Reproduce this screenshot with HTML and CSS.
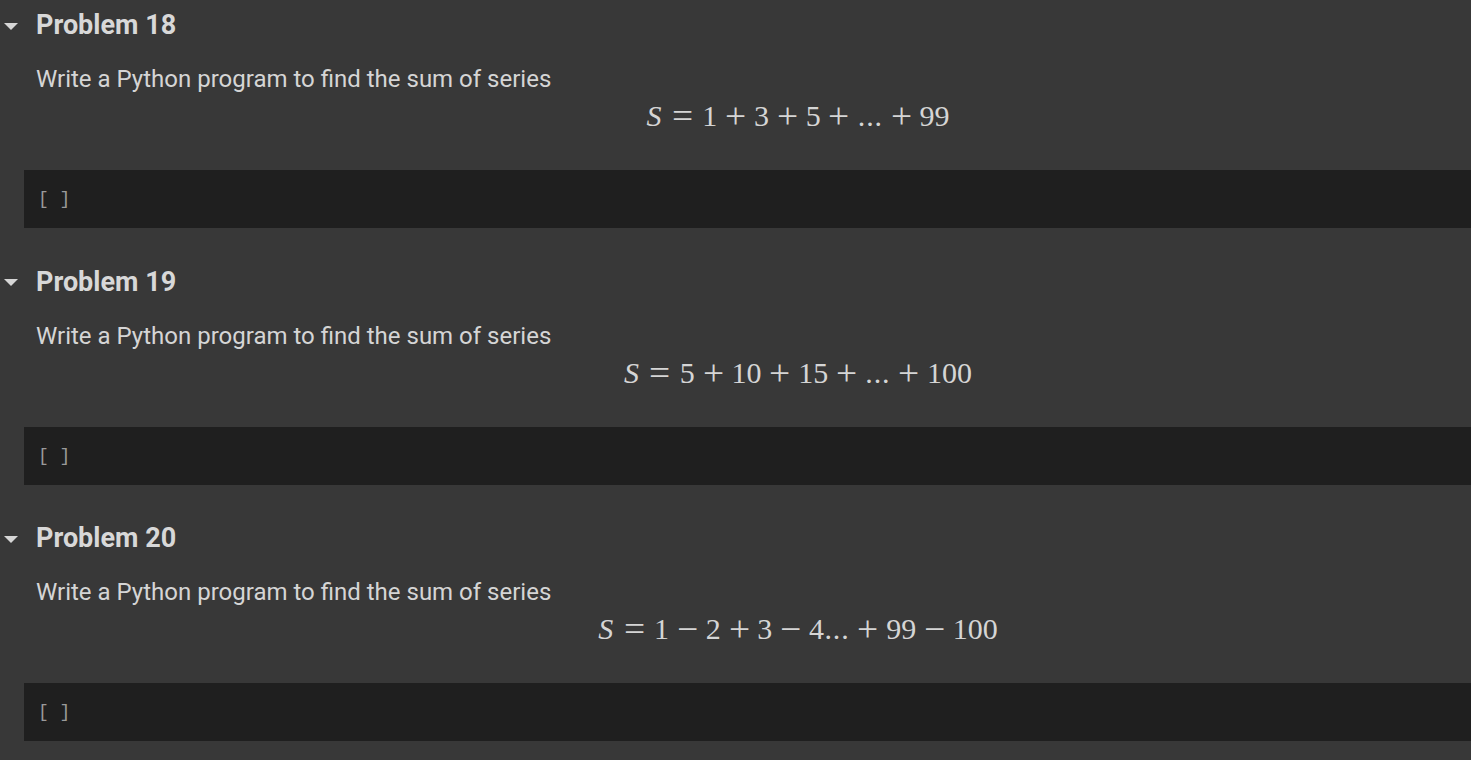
FILE: index.html
```html
<!DOCTYPE html>
<html>
<head>
<meta charset="utf-8">
<link rel="stylesheet" href="styles.css">
</head>
<body>
<div class="notebook">
  <section class="section">
    <div class="header">
      <span class="toggle"><svg width="14" height="8" viewBox="0 0 14 8"><path d="M0 0 L14 0 L7 7 Z" fill="#d6d6d6"/></svg></span>
      <h2 class="title">Problem 18</h2>
    </div>
    <div class="markdown">
      <p class="desc">Write a Python program to find the sum of series</p>
      <div class="math"><i class="mi">S</i><span class="rel"><span class="g">=</span></span>1<span class="bin"><span class="g">+</span></span>3<span class="bin"><span class="g">+</span></span>5<span class="bin"><span class="g">+</span></span><span class="dots">...</span><span class="bin"><span class="g">+</span></span>99</div>
    </div>
    <div class="cell"><span class="prompt">[ ]</span></div>
  </section>
  <section class="section">
    <div class="header">
      <span class="toggle"><svg width="14" height="8" viewBox="0 0 14 8"><path d="M0 0 L14 0 L7 7 Z" fill="#d6d6d6"/></svg></span>
      <h2 class="title">Problem 19</h2>
    </div>
    <div class="markdown">
      <p class="desc">Write a Python program to find the sum of series</p>
      <div class="math"><i class="mi">S</i><span class="rel"><span class="g">=</span></span>5<span class="bin"><span class="g">+</span></span>10<span class="bin"><span class="g">+</span></span>15<span class="bin"><span class="g">+</span></span><span class="dots">...</span><span class="bin"><span class="g">+</span></span>100</div>
    </div>
    <div class="cell"><span class="prompt">[ ]</span></div>
  </section>
  <section class="section">
    <div class="header">
      <span class="toggle"><svg width="14" height="8" viewBox="0 0 14 8"><path d="M0 0 L14 0 L7 7 Z" fill="#d6d6d6"/></svg></span>
      <h2 class="title">Problem 20</h2>
    </div>
    <div class="markdown">
      <p class="desc">Write a Python program to find the sum of series</p>
      <div class="math"><i class="mi">S</i><span class="rel"><span class="g">=</span></span>1<span class="bin"><span class="g">−</span></span>2<span class="bin"><span class="g">+</span></span>3<span class="bin"><span class="g">−</span></span>4<span class="dots">...</span><span class="bin"><span class="g">+</span></span>99<span class="bin"><span class="g">−</span></span>100</div>
    </div>
    <div class="cell"><span class="prompt">[ ]</span></div>
  </section>
</div>
</body>
</html>
```

FILE: styles.css
```css
html, body {
  margin: 0;
  padding: 0;
  background: #383838;
  overflow: hidden;
}
body {
  width: 1471px;
  height: 760px;
  font-family: Roboto, "Liberation Sans", sans-serif;
  color: #d5d5d5;
}
.notebook {
  display: flex;
  flex-direction: column;
}
.section {
  display: flex;
  flex-direction: column;
  height: 256.5px;
}
.header {
  display: flex;
  align-items: center;
  height: 48px;
  margin-top: 1px;
}
.toggle {
  width: 36px;
  display: flex;
  align-items: center;
  padding-left: 4px;
  box-sizing: border-box;
  padding-top: 3px;
}
.toggle svg { display: block; }
.title {
  margin: 0;
  font-size: 27px;
  font-weight: 700;
  line-height: 48px;
  color: #d8d8d8;
}
.markdown {
  padding-left: 36px;
  width: 1524px;
  box-sizing: content-box;
}
.desc {
  margin: 15px 0 0 0;
  font-size: 24px;
  line-height: 30px;
}
.math {
  text-align: center;
  font-family: "Liberation Serif", "DejaVu Serif", serif;
  font-size: 30px;
  line-height: 40px;
  margin-top: 2px;
  white-space: nowrap;
}
.mi { font-style: italic; margin-right: 0.03em; }
.rel, .bin {
  display: inline-block;
  width: 0.778em;
  text-align: center;
}
.rel { margin: 0 0.2778em; }
.bin { margin: 0 0.2222em; }
.g {
  display: inline-block;
  transform: scale(1.25, 1.2);
}
.dots {
  letter-spacing: 0.028em;
  margin-left: 0.02em;
}
.cell {
  margin-top: 34px;
  margin-left: 24px;
  height: 58px;
  background: #1f1f1f;
  display: flex;
  align-items: center;
  padding-left: 14px;
}
.prompt {
  font-family: "Liberation Mono", "DejaVu Sans Mono", monospace;
  font-size: 18px;
  color: #9a9a9a;
  white-space: pre;
}
```
